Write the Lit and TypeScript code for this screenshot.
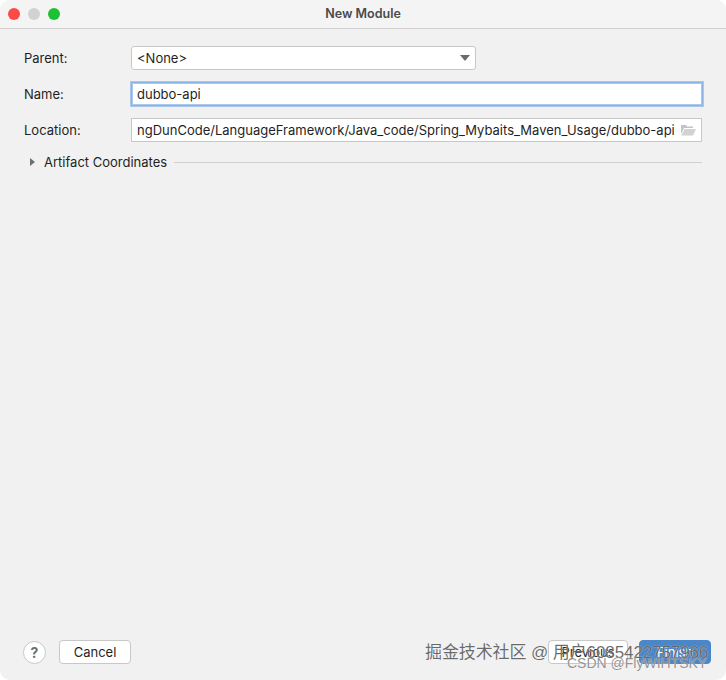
import { LitElement, css, html } from 'lit'
import { customElement } from 'lit/decorators.js'

@customElement('app-root')
export class AppRoot extends LitElement {
  static styles = css`
    :host {
      display: block;
      width: 726px;
      height: 680px;
      background: #ffffff;
      font-family: 'Inter', 'Liberation Sans', sans-serif;
      font-size: 13px;
      color: #1f1f1f;
    }
    .window {
      position: relative;
      height: 680px;
      box-sizing: border-box;
      display: flex;
      flex-direction: column;
      background: #f1f1f1;
      border-radius: 10px;
      overflow: hidden;
    }
    .titlebar {
      flex: none;
      height: 29px;
      padding-bottom: 2px;
      box-sizing: border-box;
      display: flex;
      align-items: center;
      justify-content: center;
      position: relative;
      background: #f4f4f4;
      border-bottom: 1px solid #cfcfcf;
      font-size: 12.5px;
      font-weight: 600;
      color: #4a4a4a;
    }
    .lights {
      position: absolute;
      left: 8px;
      top: 8px;
      display: flex;
      gap: 8px;
    }
    .light {
      width: 12px;
      height: 12px;
      border-radius: 50%;
    }
    .red { background: #fc4a45; }
    .grey { background: #d2d2d2; }
    .green { background: #1cc231; }
    .form {
      flex: 1;
      padding: 17px 24px 0;
      display: grid;
      grid-template-columns: 107px 1fr;
      row-gap: 12px;
      align-items: center;
      align-content: start;
    }
    .field {
      box-sizing: border-box;
      height: 24px;
      background: #fff;
      border: 1px solid #c8c8c8;
      display: flex;
      align-items: center;
      padding: 0 5px;
      white-space: nowrap;
      overflow: hidden;
    }
    .select {
      width: 345px;
      border-radius: 3px;
      justify-content: space-between;
      padding-right: 5px;
    }
    .arrow {
      width: 0;
      height: 0;
      border-left: 5px solid transparent;
      border-right: 5px solid transparent;
      border-top: 6px solid #6b6b6b;
    }
    .focused {
      border: 1px solid #8ab4e6;
      outline: 1px solid #a9c8ec;
      box-shadow: inset 0 0 0 1px #a9c8ec;
      margin-right: -1px;
    }
    .location {
      justify-content: space-between;
      padding-right: 5px;
    }
    .section {
      grid-column: 1 / 3;
      display: flex;
      align-items: center;
      height: 16px;
      padding-left: 6px;
    }
    .section .tri {
      width: 0;
      height: 0;
      border-top: 4px solid transparent;
      border-bottom: 4px solid transparent;
      border-left: 5px solid #707070;
      margin-right: 9px;
    }
    .section .rule {
      flex: 1;
      height: 1px;
      background: #d0d0d0;
      margin-left: 7px;
    }
    .footer {
      flex: none;
      height: 40px;
      box-sizing: border-box;
      padding: 0 15px 0 23px;
      display: flex;
      align-items: flex-start;
    }
    .help {
      box-sizing: border-box;
      width: 23px;
      height: 23px;
      margin-top: 1px;
      border-radius: 50%;
      background: #fff;
      border: 1px solid #c8c8c8;
      color: #6e6e6e;
      font-weight: 700;
      font-size: 14px;
      display: flex;
      align-items: center;
      justify-content: center;
    }
    .btn {
      box-sizing: border-box;
      width: 72px;
      height: 24px;
      border-radius: 4px;
      background: #fff;
      border: 1px solid #c8c8c8;
      display: flex;
      align-items: center;
      justify-content: center;
    }
    .cancel { margin-left: 13px; }
    .spacer { flex: 1; }
    .previous { width: 80px; }
    .finish {
      margin-left: 11px;
      background: #4a86c8;
      border-color: #4a86c8;
      color: #fff;
    }
    .mark {
      position: absolute;
      white-space: nowrap;
      color: rgba(80, 80, 80, 0.85);
      text-shadow: 0 0 1px rgba(255, 255, 255, 0.9);
    }
    .juejin {
      left: 425px;
      top: 638px;
      font-size: 17px;
      letter-spacing: -0.1px;
      font-family: 'Liberation Sans', 'Noto Sans CJK SC', sans-serif;
    }
    .csdn {
      left: 567px;
      top: 655px;
      font-size: 14px;
      color: rgba(120, 120, 120, 0.8);
      font-family: 'Liberation Sans', sans-serif;
    }
  `

  render() {
    return html`
      <div class="window">
        <div class="titlebar">
          <div class="lights">
            <div class="light red"></div>
            <div class="light grey"></div>
            <div class="light green"></div>
          </div>
          New Module
        </div>
        <div class="form">
          <label>Parent:</label>
          <div class="field select"><span>&lt;None&gt;</span><i class="arrow"></i></div>
          <label>Name:</label>
          <div class="field focused">dubbo-api</div>
          <label>Location:</label>
          <div class="field location">
            <span>ngDunCode/LanguageFramework/Java_code/Spring_Mybaits_Maven_Usage/dubbo-api</span>
            <svg width="16" height="12" viewBox="0 0 16 12">
              <path d="M1 1h5l1 1.500h6V4H4L1 10z" fill="#c4c4c4" />
              <path d="M4.500 5H16l-3 6.500H1.200z" fill="#d2d2d2" />
            </svg>
          </div>
          <div class="section">
            <i class="tri"></i>
            <span>Artifact Coordinates</span>
            <div class="rule"></div>
          </div>
        </div>
        <div class="footer">
          <div class="help">?</div>
          <div class="btn cancel">Cancel</div>
          <div class="spacer"></div>
          <div class="btn previous">Previous</div>
          <div class="btn finish">Finish</div>
        </div>
        <div class="mark juejin">掘金技术社区 @ 用户6085422757966</div>
        <div class="mark csdn">CSDN @FlyWIHTSKY</div>
      </div>
    `
  }
}
